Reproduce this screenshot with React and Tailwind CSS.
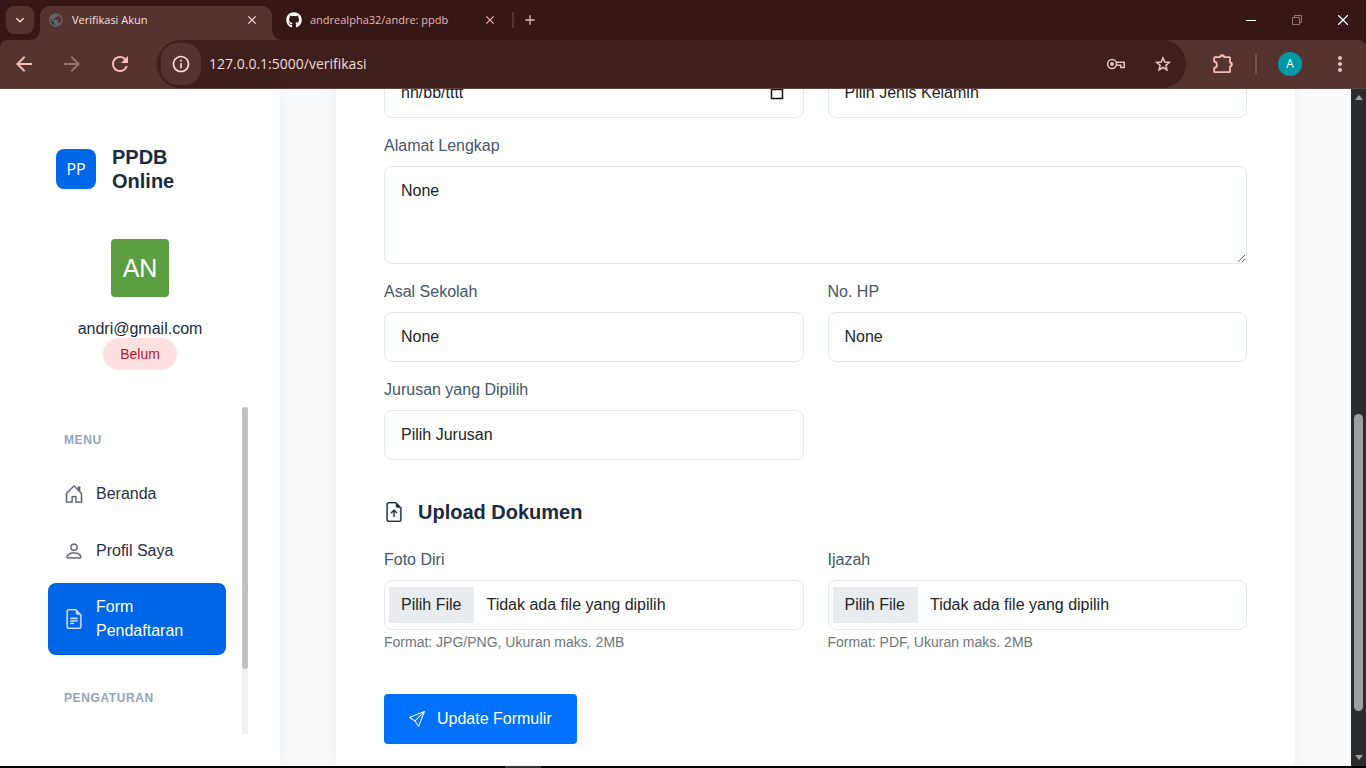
import { FaGithub } from "react-icons/fa";
import {
  MdPublic,
  MdClose,
  MdAdd,
  MdArrowBack,
  MdArrowForward,
  MdRefresh,
  MdInfoOutline,
  MdMoreVert,
  MdExpandMore,
} from "react-icons/md";
import { BsSend } from "react-icons/bs";

const chromeFont = "font-['Open_Sans','Noto_Sans',sans-serif]";

function KeyIcon() {
  return (
    <svg viewBox="0 0 20 12" className="h-3 w-5" fill="none" stroke="currentColor" strokeWidth="1.5">
      <circle cx="6" cy="6" r="4.4" />
      <circle cx="6" cy="6" r="1.9" fill="currentColor" stroke="none" />
      <path d="M10 4.2h8.2v5.2h-3.4V7.200H10" />
    </svg>
  );
}

function StarIcon() {
  return (
    <svg viewBox="0 0 18 18" className="size-[18px]" fill="none" stroke="currentColor" strokeWidth="1.6">
      <path d="M9 3l1.800 4.100 4.400.4-3.300 2.900 1 4.400L9 12.500l-3.900 2.300 1-4.400-3.300-2.900 4.400-.4z" />
    </svg>
  );
}

function PuzzleIcon() {
  return (
    <svg viewBox="0 0 22 22" className="size-[22px]" fill="none" stroke="currentColor" strokeWidth="1.8">
      <path
        strokeLinejoin="round"
        d="M2.900 4.200h5.200c.2-2.600 3.800-2.600 4 0h5.200a.7.7 0 0 1 .7.7v4.600c2.600.2 2.600 3.800 0 4v5a.7.7 0 0 1-.7.7H2.900a.7.7 0 0 1-.7-.7v-3.600c3.600-.4 3.600-6 0-6.400V4.900a.7.7 0 0 1 .7-.7z"
      />
      <path d="M8 3.800c.3-2.400 3.900-2.400 4.200 0zM18.500 9.400c2.300.3 2.300 3.900 0 4.200z" fill="currentColor" stroke="none" />
    </svg>
  );
}

function HouseIcon() {
  return (
    <svg viewBox="0 0 16 16" className="size-5 shrink-0" fill="currentColor" stroke="currentColor" strokeWidth="0.2">
      <path
        fillRule="evenodd"
        d="M7.646 1.146a.5.5 0 0 1 .708 0l6 6a.5.5 0 0 1 .146.354v7a.5.5 0 0 1-.5.5H9.5a.5.5 0 0 1-.5-.5v-4H7v4a.5.5 0 0 1-.5.5H2a.5.5 0 0 1-.5-.5v-7a.5.5 0 0 1 .146-.354l6-6zM2.5 7.707V14H6v-4a.5.5 0 0 1 .5-.5h3a.5.5 0 0 1 .5.5v4h3.500V7.707L8 2.207l-5.500 5.500z"
      />
      <path d="M13 2.500V6l-2-2V2.500a.5.5 0 0 1 .5-.5h1a.5.5 0 0 1 .5.5z" />
    </svg>
  );
}

function PersonIcon() {
  return (
    <svg viewBox="0 0 16 16" className="size-5 shrink-0" fill="currentColor" stroke="currentColor" strokeWidth="0.2">
      <path
        fillRule="evenodd"
        d="M13 14s1 0 1-1-1-4-6-4-6 3-6 4 1 1 1 1h10zM3.022 13h9.956a.274.274 0 0 0 .014-.002l.008-.002c-.001-.246-.154-.986-.832-1.664C11.516 10.680 10.289 10 8 10c-2.290 0-3.516.680-4.168 1.332-.678.678-.830 1.418-.832 1.664a1.050 1.050 0 0 0 .022.004zM8 7a2 2 0 1 0 0-4 2 2 0 0 0 0 4zm3-2a3 3 0 1 1-6 0 3 3 0 0 1 6 0z"
      />
    </svg>
  );
}

function FileIcon({ children }) {
  return (
    <svg viewBox="0 0 16 16" className="size-5 shrink-0" fill="currentColor" stroke="currentColor" strokeWidth="0.2">
      <path d="M4 0h5.500v1H4a1 1 0 0 0-1 1v12a1 1 0 0 0 1 1h8a1 1 0 0 0 1-1V4.500h1V14a2 2 0 0 1-2 2H4a2 2 0 0 1-2-2V2a2 2 0 0 1 2-2z" />
      <path d="M9.500 3V0L14 4.500h-3A1.500 1.500 0 0 1 9.500 3z" />
      {children}
    </svg>
  );
}

function TabFlare({ className }) {
  return (
    <svg viewBox="0 0 10 10" className={"absolute bottom-0 size-2.5 " + className} fill="#55332f">
      <path d="M10 0v10H0A10 10 0 0 0 10 0z" />
    </svg>
  );
}

function BrowserTabs() {
  return (
    <div className="flex h-10 items-end bg-[#351715] text-[11px]">
      <button aria-label="Cari tab" className="mr-1.5 mb-1.5 ml-1.5 flex size-7 items-center justify-center rounded-lg bg-[#55332f] text-[#fbdfdb]">
        <MdExpandMore className="size-4" />
      </button>
      <div className="relative flex h-[34px] w-[232px] items-center rounded-t-[10px] bg-[#55332f] pr-3 pb-1.5 pl-2 text-[#f8e2df]">
        <TabFlare className="-left-2.5" />
        <TabFlare className="-right-2.5 -scale-x-100" />
        <MdPublic className="size-4 text-[#5f6a6e]" />
        <span className="ml-2 flex-1">Verifikasi Akun</span>
        <button aria-label="Tutup tab">
          <MdClose className="size-4 p-px" />
        </button>
      </div>
      <div className="flex h-[34px] w-[240px] items-center pr-3.5 pb-1.5 pl-3.5 text-[#eab8b1]">
        <FaGithub className="size-4 text-white" />
        <span className="ml-2 flex-1">andrealpha32/andre: ppdb</span>
        <button aria-label="Tutup tab">
          <MdClose className="size-4 p-px" />
        </button>
      </div>
      <div className="mb-3 h-4 w-0.5 bg-[#55332f]" />
      <button aria-label="Tab baru" className="mb-3 ml-2 text-[#eab8b1]">
        <MdAdd className="size-4" />
      </button>
      <div className="ml-auto flex h-full items-center text-white">
        <button aria-label="Minimalkan" className="flex w-[46px] justify-center">
          <svg viewBox="0 0 10 10" className="size-2.5" stroke="currentColor"><path d="M0 5.500h10" /></svg>
        </button>
        <button aria-label="Pulihkan" className="flex w-[46px] justify-center text-[#8d7a78]">
          <svg viewBox="0 0 10 10" className="size-2.5" stroke="currentColor" fill="none"><path d="M.5 2.500h7v7h-7zM2.500 2.500v-2h7v7h-2" /></svg>
        </button>
        <button aria-label="Tutup" className="flex w-[46px] justify-center">
          <svg viewBox="0 0 10 10" className="size-2.5" stroke="currentColor" strokeWidth="1.3"><path d="M0 0l10 10M10 0L0 10" /></svg>
        </button>
      </div>
    </div>
  );
}

function BrowserToolbar() {
  return (
    <div className="flex h-[49px] items-center rounded-t-lg border-b border-[#5f433f] bg-[#55332f] text-[#f8bcb4]">
      <div className="flex w-[157px] items-center gap-6 pl-3">
        <button aria-label="Kembali"><MdArrowBack className="size-6" /></button>
        <button aria-label="Maju" className="text-[#94736f]"><MdArrowForward className="size-6" /></button>
        <button aria-label="Muat ulang"><MdRefresh className="size-6" /></button>
      </div>
      <div className="flex h-12 flex-1 items-center rounded-full bg-[#3d1f1c] pr-[14px] pl-1">
        <button aria-label="Informasi situs" className="flex h-[42px] w-10 items-center justify-center rounded-2xl bg-[#55332f] text-[#fbdfdb]">
          <MdInfoOutline className="size-5" />
        </button>
        <input
          aria-label="Alamat"
          defaultValue="127.0.0.1:5000/verifikasi"
          className="ml-2 min-w-0 flex-1 bg-transparent text-sm text-[#f4dcd8] outline-none"
        />
        <button aria-label="Sandi" className="mr-7 text-[#e3c4bf]"><KeyIcon /></button>
        <button aria-label="Markah" className="text-[#e3c4bf]"><StarIcon /></button>
      </div>
      <button aria-label="Ekstensi" className="ml-[26px]"><PuzzleIcon /></button>
      <div className="ml-[21px] h-5 w-0.5 bg-[#73504c]" />
      <button aria-label="Profil" className="ml-[21px] flex size-6 items-center justify-center rounded-full bg-[#0097a7] text-xs text-white">
        A
      </button>
      <button aria-label="Menu" className="mr-3.5 ml-[26px]"><MdMoreVert className="size-6" /></button>
    </div>
  );
}

function NavItem({ icon, label, active }) {
  return (
    <a
      href="#"
      className={
        active
          ? "flex items-center gap-3 rounded-lg bg-[#0066e8] px-4 py-3 text-white"
          : "flex min-h-[49px] items-center gap-3 rounded-lg px-4 text-[#2a2f45]"
      }
    >
      <span className={active ? "text-white/80" : "text-[#5f6274]"}>{icon}</span>
      <span>{label}</span>
    </a>
  );
}

function Sidebar() {
  return (
    <aside className="z-10 flex w-[280px] shrink-0 flex-col bg-white px-8 pt-14 pb-8 shadow-[0_0_20px_rgba(0,0,0,0.05)]">
      <div className="flex items-center gap-4 px-6">
        <div className="flex size-10 items-center justify-center rounded-lg bg-[#0066e8] font-['Open_Sans','Noto_Sans',sans-serif] text-white">
          PP
        </div>
        <h1 className="w-20 text-xl leading-6 font-bold text-[#1a2b3f]">PPDB Online</h1>
      </div>
      <div className="mt-[46px] flex flex-col items-center">
        <div className="flex size-[58px] items-center justify-center rounded bg-[#5c9f43] pt-px text-[25px] text-white">AN</div>
        <p className="mt-5 text-[#1a2b3f]">andri@gmail.com</p>
        <span className="-mt-[3px] rounded-full bg-[#ffe0e1] px-[17px] py-1.5 text-sm text-[#b3172d]">Belum</span>
      </div>
      <div className="mt-[37px] flex min-h-0 flex-1">
        <nav className="min-w-0 flex-1 overflow-hidden px-4 pt-6">
          <h2 className="px-4 text-xs leading-[18px] font-bold tracking-wider text-[#94a3b8]">MENU</h2>
          <div className="mt-5 flex flex-col gap-2">
            <NavItem icon={<HouseIcon />} label="Beranda" />
            <NavItem icon={<PersonIcon />} label="Profil Saya" />
            <NavItem
              active
              icon={
                <FileIcon>
                  <path d="M5 11.500a.5.5 0 0 1 .5-.5h2a.5.5 0 0 1 0 1h-2a.5.5 0 0 1-.5-.5zm0-2a.5.5 0 0 1 .5-.5h5a.5.5 0 0 1 0 1h-5a.5.5 0 0 1-.5-.5zm0-2a.5.5 0 0 1 .5-.5h5a.5.5 0 0 1 0 1h-5a.5.5 0 0 1-.5-.5z" />
                </FileIcon>
              }
              label="Form Pendaftaran"
            />
          </div>
          <h2 className="mt-[34px] px-4 text-xs leading-[18px] font-bold tracking-wider text-[#94a3b8]">PENGATURAN</h2>
        </nav>
        <div className="w-1.5 bg-[#f1f1f1]">
          <div className="h-4/5 rounded-full bg-[#c1c1c1]" />
        </div>
      </div>
    </aside>
  );
}

const boxClass = "block w-full rounded-lg border border-[#e2e8f0] bg-white px-4 py-3 text-base leading-6 text-[#212529] outline-none";

function Field({ id, label, children }) {
  return (
    <div>
      <label htmlFor={id} className="mb-2 block text-[#475569]">{label}</label>
      {children}
    </div>
  );
}

function FileField({ id, label, hint }) {
  return (
    <div>
      <label htmlFor={id} className="block text-[#475569]">
        <span className="mb-2 block">{label}</span>
        <span className="flex h-[50px] items-center gap-3 rounded-lg border border-[#e2e8f0] pl-1 text-[#212529]">
          <span className="bg-[#e9ecef] py-1.5 pr-[13px] pl-3">Pilih File</span>
          <span>Tidak ada file yang dipilih</span>
        </span>
      </label>
      <input id={id} type="file" className="sr-only" />
      <p className="mt-0.5 text-sm leading-[21px] text-[#6c757d]">{hint}</p>
    </div>
  );
}

function RegistrationForm() {
  return (
    <form className="-mt-[21px] flex-1 bg-white px-12 shadow-[0_0_20px_rgba(0,0,0,0.05)]">
      <div className="grid grid-cols-2 gap-x-6 gap-y-4">
        <div className={boxClass + " flex items-center"}>
          <input aria-label="Tanggal Lahir" placeholder="hh/bb/tttt" className="min-w-0 flex-1 outline-none placeholder:text-[#212529]" />
          <svg viewBox="0 0 14 14" className="mr-[3px] size-3.5" fill="none" stroke="#111" strokeWidth="1.500">
            <path d="M1.500 3h11v9.500h-11zM1 3.500h12M4 1v2M10 1v2" />
          </svg>
        </div>
        <select aria-label="Jenis Kelamin" className={boxClass + " appearance-none"}>
          <option>Pilih Jenis Kelamin</option>
        </select>
        <div className="col-span-2">
          <Field id="alamat" label="Alamat Lengkap">
            <textarea id="alamat" rows="3" defaultValue="None" className={boxClass} />
          </Field>
        </div>
        <Field id="sekolah" label="Asal Sekolah">
          <input id="sekolah" defaultValue="None" className={boxClass} />
        </Field>
        <Field id="hp" label="No. HP">
          <input id="hp" defaultValue="None" className={boxClass} />
        </Field>
        <Field id="jurusan" label="Jurusan yang Dipilih">
          <select id="jurusan" className={boxClass + " appearance-none"}>
            <option>Pilih Jurusan</option>
          </select>
        </Field>
      </div>
      <h2 className="mt-10 mb-6 flex items-center gap-3.5 text-xl leading-6 font-bold text-[#1a2b3f]">
        <FileIcon>
          <path d="M8.500 11.500a.5.5 0 0 1-1 0V7.707L6.354 8.854a.5.5 0 1 1-.708-.708l2-2a.5.5 0 0 1 .708 0l2 2a.5.5 0 0 1-.708.708L8.500 7.707V11.500z" />
        </FileIcon>
        Upload Dokumen
      </h2>
      <div className="grid grid-cols-2 gap-x-6">
        <FileField id="foto" label="Foto Diri" hint="Format: JPG/PNG, Ukuran maks. 2MB" />
        <FileField id="ijazah" label="Ijazah" hint="Format: PDF, Ukuran maks. 2MB" />
      </div>
      <button type="button" className="mt-[41px] flex h-[50px] items-center gap-3 rounded bg-[#0072ff] px-[25px] text-white">
        <BsSend className="size-4" />
        Update Formulir
      </button>
    </form>
  );
}

function PageScrollbar() {
  return (
    <div className="flex w-[15px] shrink-0 flex-col items-center bg-[#2c2c2c] py-1.5 text-[#9f9f9f]">
      <svg viewBox="0 0 8 5" className="h-[5px] w-2" fill="currentColor"><path d="M4 0l4 5H0z" /></svg>
      <div className="flex-[314]" />
      <div className="w-[9px] flex-[297] rounded-full bg-[#9f9f9f]" />
      <div className="flex-[44]" />
      <svg viewBox="0 0 8 5" className="h-[5px] w-2" fill="currentColor"><path d="M0 0h8L4 5z" /></svg>
    </div>
  );
}

export default function App() {
  return (
    <div className="flex h-screen flex-col overflow-hidden bg-[#f8fafc]">
      <header className={chromeFont + " shrink-0 bg-[#351715]"}>
        <BrowserTabs />
        <BrowserToolbar />
      </header>
      <div className="flex min-h-0 flex-1 font-['Liberation_Sans',Arial,sans-serif] text-base">
        <Sidebar />
        <main className="flex min-w-0 flex-1 overflow-hidden px-14">
          <RegistrationForm />
        </main>
        <PageScrollbar />
      </div>
      <footer className="flex h-0.5 shrink-0 bg-black">
        <div className="ml-[37%] w-9 bg-[#333]" />
      </footer>
    </div>
  );
}
